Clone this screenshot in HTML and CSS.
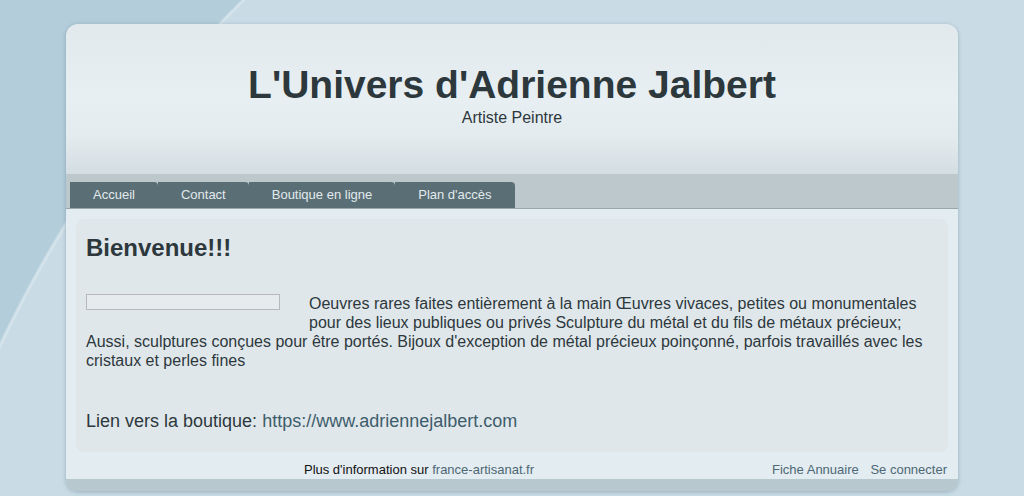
FILE: index.html
```html
<!DOCTYPE html>
<html lang="fr">
<head>
    <meta charset="UTF-8">
    <title>L'Univers d'Adrienne Jalbert</title>
    <link rel="stylesheet" href="styles.css">
</head>
<body>

<div class="page">
    <div class="header">
        <h1>L'Univers d'Adrienne Jalbert</h1>
        <div class="slogan">Artiste Peintre</div>
    </div>

    <div class="menu">
        <a href="#">Accueil</a>
        <a href="#">Contact</a>
        <a href="#">Boutique en ligne</a>
        <a href="#">Plan d'accès</a>
    </div>

    <div class="main">
        <div class="content">
            <h2>Bienvenue!!!</h2>
            <p class="intro">
                <span class="photo"></span>
                Oeuvres rares faites entièrement à la main Œuvres vivaces, petites ou monumentales pour des lieux publiques ou privés Sculpture du métal et du fils de métaux précieux; Aussi, sculptures conçues pour être portés. Bijoux d'exception de métal précieux poinçonné, parfois travaillés avec les cristaux et perles fines
            </p>
            <p class="shop">Lien vers la boutique: <a href="#">https://www.adriennejalbert.com</a></p>
        </div>

        <div class="footer">
            <div class="credits">Plus d'information sur <a href="#">france-artisanat.fr</a></div>
            <div class="links">
                <a href="#">Fiche Annuaire</a>
                <a href="#">Se connecter</a>
            </div>
        </div>
    </div>
    <div class="bottom"></div>
</div>

</body>
</html>
```

FILE: styles.css
```css
html, body {
    height: 100%;
}
body {
    font-family: "Liberation Sans", Arial, sans-serif;
    margin: 0;
    padding: 24px 0 0;
    box-sizing: border-box;
    color: #2d383d;
    background:
        radial-gradient(ellipse 1150px 1230px at 1024px 900px, transparent 99.6%, rgba(255,255,255,0.35) 99.8%, transparent 100%),
        radial-gradient(ellipse 1150px 1230px at 1024px 900px, #c9dce6 99.7%, #b3cddb 100%);
    background-color: #a9c6d6;
    overflow: hidden;
}
a {
    text-decoration: none;
    color: #3d5d6c;
}
.page {
    width: 892px;
    margin: 0 auto;
    border-radius: 12px;
    box-shadow: 0 1px 4px rgba(60,90,105,0.35);
    overflow: hidden;
}
.header {
    height: 150px;
    box-sizing: border-box;
    padding-top: 38px;
    text-align: center;
    background: linear-gradient(to bottom, #e2e9ed 0%, #e8eff2 50%, #e4ebee 75%, #d3dde2 100%);
}
h1 {
    margin: 0;
    font-size: 39px;
    line-height: 46px;
    color: #2d383d;
}
.slogan {
    font-size: 16px;
    line-height: 18px;
    margin-top: 1px;
    color: #2d383d;
}
.menu {
    display: flex;
    height: 35px;
    box-sizing: border-box;
    padding: 8px 4px 0;
    background: #bdc8cd;
    border-bottom: 1px solid #98a7ad;
}
.menu a {
    display: block;
    padding: 0 23px;
    line-height: 26px;
    font-size: 13px;
    white-space: nowrap;
    color: #e2eaed;
    background: #5a6e75;
    border-top-right-radius: 4px;
}
.main {
    background: #e3ecf1;
    padding: 10px 10px 0;
}
.content {
    background: #e0e7ea;
    border-radius: 8px;
    padding: 15px 10px 20px;
}
h2 {
    margin: 0 0 32px;
    font-size: 24px;
    line-height: 28px;
}
.intro {
    margin: 0;
    font-size: 16px;
    line-height: 19px;
}
.photo {
    float: left;
    width: 192px;
    height: 14px;
    border: 1px solid #b5b9bb;
    background: #e6ebed;
    margin: 0 29px 10px 0;
}
.shop {
    margin: 41px 0 0;
    font-size: 18px;
    line-height: 21px;
}
.footer {
    display: flex;
    margin: 0 -10px;
    padding: 10px 11px 1px 0;
    font-size: 13px;
    line-height: 16px;
}
.credits {
    flex: 1;
    text-align: center;
    color: #111;
}
.credits a {
    color: #4d6874;
}
.links a {
    color: #4d6874;
}
.links a + a {
    margin-left: 8px;
}
.bottom {
    height: 12px;
    background: #b8c8cf;
}
```
